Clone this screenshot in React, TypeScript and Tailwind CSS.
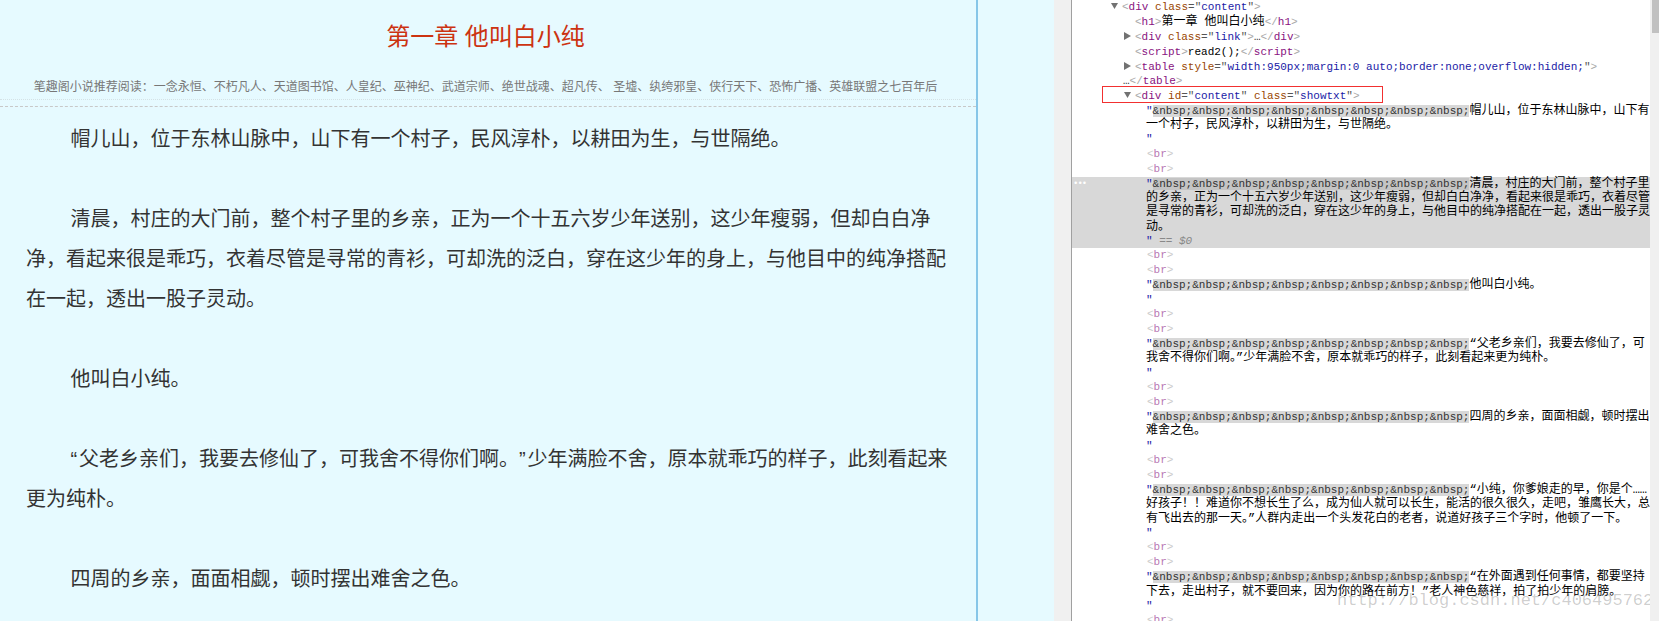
const mono = "font-['Liberation_Mono','Noto_Sans_CJK_SC',monospace]";

const paragraphs = [
  '帽儿山，位于东林山脉中，山下有一个村子，民风淳朴，以耕田为生，与世隔绝。',
  '清晨，村庄的大门前，整个村子里的乡亲，正为一个十五六岁少年送别，这少年瘦弱，但却白白净净，看起来很是乖巧，衣着尽管是寻常的青衫，可却洗的泛白，穿在这少年的身上，与他目中的纯净搭配在一起，透出一股子灵动。',
  '他叫白小纯。',
  '“父老乡亲们，我要去修仙了，可我舍不得你们啊。”少年满脸不舍，原本就乖巧的样子，此刻看起来更为纯朴。',
  '四周的乡亲，面面相觑，顿时摆出难舍之色。',
  '“小纯，你爹娘走的早，你是个……好孩子！！',
];

const nodes = [
  '帽儿山，位于东林山脉中，山下有一个村子，民风淳朴，以耕田为生，与世隔绝。',
  '清晨，村庄的大门前，整个村子里的乡亲，正为一个十五六岁少年送别，这少年瘦弱，但却白白净净，看起来很是乖巧，衣着尽管是寻常的青衫，可却洗的泛白，穿在这少年的身上，与他目中的纯净搭配在一起，透出一股子灵动。',
  '他叫白小纯。',
  '“父老乡亲们，我要去修仙了，可我舍不得你们啊。”少年满脸不舍，原本就乖巧的样子，此刻看起来更为纯朴。',
  '四周的乡亲，面面相觑，顿时摆出难舍之色。',
  '“小纯，你爹娘走的早，你是个……好孩子！！难道你不想长生了么，成为仙人就可以长生，能活的很久很久，走吧，雏鹰长大，总有飞出去的那一天。”人群内走出一个头发花白的老者，说道好孩子三个字时，他顿了一下。',
  '“在外面遇到任何事情，都要坚持下去，走出村子，就不要回来，因为你的路在前方！”老人神色慈祥，拍了拍少年的肩膀。',
];

function Arrow({ open }: { open?: boolean }) {
  if (open) {
    return (
      <svg width="7" height="6" viewBox="0 0 7 6" className="absolute top-[2px] -left-[11px] fill-[#727272]">
        <path d="M0 0h7L3.5 6z" />
      </svg>
    );
  }
  return (
    <svg width="7" height="8" viewBox="0 0 7 8" className="absolute top-[1px] -left-[11px] fill-[#727272]">
      <path d="M0 0l7 4-7 4z" />
    </svg>
  );
}

function P({ children }: { children: React.ReactNode }) {
  return <span className="text-[#a8a8a8]">{children}</span>;
}

function Tag({ name }: { name: string }) {
  return <span className="text-[#881280]">{name}</span>;
}

function Attr({ name, value }: { name: string; value: string }) {
  return (
    <>
      {' '}
      <span className="text-[#994500]">{name}</span>
      <span className="text-[#555]">="</span>
      <span className="text-[#1a1aa6]">{value}</span>
      <span className="text-[#555]">"</span>
    </>
  );
}

function Br() {
  return (
    <div className="h-[15px] pl-[75px] leading-[15px] opacity-60">
      <P>&lt;</P>
      <Tag name="br" />
      <P>&gt;</P>
    </div>
  );
}

function TextNode({ text, selected }: { text: string; selected?: boolean }) {
  return (
    <div className={`pl-[74px] leading-[14.33px] ${selected ? 'bg-[#d8d8d8]' : ''}`}>
      <span className="text-[#1a1aa6]">"</span>
      <span className={selected ? 'bg-[#c4c4c4] text-[#333]' : 'bg-[#d8d8d8] text-[#333]'}>
        {'&nbsp;'.repeat(8)}
      </span>
      <span className="text-[12px] leading-none text-black">{text}</span>
      <br />
      <span className="text-[#1a1aa6]">"</span>
      {selected && <span className="text-[#888] italic"> == $0</span>}
    </div>
  );
}

// curly quotes are a bit wider in the reference's body font
function BodyText({ text }: { text: string }) {
  const parts = text.split(/([“”])/);
  return (
    <>
      {parts.map((part, i) =>
        part === '“' || part === '”' ? (
          <span key={i} className="inline-block w-[8.5px]">
            {part}
          </span>
        ) : (
          part
        ),
      )}
    </>
  );
}

export default function App() {
  return (
    <div className="flex h-[621px] w-[1659px] overflow-hidden bg-white">
      {/* page side */}
      <div className="flex h-full w-[1054px] shrink-0 bg-[#e6faff]">
        <div className="h-full w-[978px] shrink-0 border-r-2 border-[#87c6e8] font-['Liberation_Sans','Noto_Sans_CJK_SC',sans-serif]">
          <h1 className="pr-[5px] pt-[20px] text-center text-[24px] leading-[34px] text-[#cc3311]">第一章 他叫白小纯</h1>
          <div className="mt-[23px] pr-[5px] text-center text-[12px] leading-[20px] text-[#777]">
            笔趣阁小说推荐阅读：一念永恒、不朽凡人、天道图书馆、人皇纪、巫神纪、武道宗师、绝世战魂、超凡传、 圣墟、纨绔邪皇、侠行天下、恐怖广播、英雄联盟之七百年后
          </div>
          <div className="mt-[2px] border-t border-dotted border-[#d4e2e6]" />
          <div className="mt-[6px] border-t border-dashed border-[#c8c8c8]" />
          <div className="w-[948px] pl-[26px] pt-[12px] text-[20px] leading-[40px] text-[#333]">
            {paragraphs.map((p, i) => (
              <p key={i} className="mb-[40px]">
                {'\u00a0'.repeat(8)}
                <BodyText text={p} />
              </p>
            ))}
          </div>
        </div>
      </div>

      {/* devtools gutter */}
      <div className="h-full w-[18px] shrink-0 border-r border-[#a0a0a0] bg-[#f0f0f0]" />

      {/* devtools tree */}
      <div className={`relative h-full min-w-0 flex-1 overflow-hidden text-[11px] ${mono}`}>
        <div className="h-[15px] pl-[50px] leading-[15px]">
          <span className="relative">
            <Arrow open />
            <P>&lt;</P>
            <Tag name="div" />
            <Attr name="class" value="content" />
            <P>&gt;</P>
          </span>
        </div>
        <div className="h-[15px] pl-[63px] leading-[15px]">
          <P>&lt;</P>
          <Tag name="h1" />
          <P>&gt;</P>
          <span className="text-[12px] leading-none text-black">第一章 他叫白小纯</span>
          <P>&lt;/</P>
          <Tag name="h1" />
          <P>&gt;</P>
        </div>
        <div className="h-[15px] pl-[63px] leading-[15px]">
          <span className="relative">
            <Arrow />
            <P>&lt;</P>
            <Tag name="div" />
            <Attr name="class" value="link" />
            <P>&gt;</P>
            <span className="text-[#333]">…</span>
            <P>&lt;/</P>
            <Tag name="div" />
            <P>&gt;</P>
          </span>
        </div>
        <div className="h-[15px] pl-[63px] leading-[15px]">
          <P>&lt;</P>
          <Tag name="script" />
          <P>&gt;</P>
          <span className="text-black">read2();</span>
          <P>&lt;/</P>
          <Tag name="script" />
          <P>&gt;</P>
        </div>
        <div className="pl-[63px] leading-[14.33px]">
          <span className="relative">
            <Arrow />
            <P>&lt;</P>
            <Tag name="table" />
            <Attr name="style" value="width:950px;margin:0 auto;border:none;overflow:hidden;" />
            <P>&gt;</P>
          </span>
        </div>
        <div className="pl-[51px] leading-[14.33px]">
          <span className="text-[#333]">…</span>
          <P>&lt;/</P>
          <Tag name="table" />
          <P>&gt;</P>
        </div>
        <div className="h-[15px] pl-[63px] leading-[15px]">
          <span className="relative">
            <Arrow open />
            <P>&lt;</P>
            <Tag name="div" />
            <Attr name="id" value="content" />
            <Attr name="class" value="showtxt" />
            <P>&gt;</P>
          </span>
        </div>

        {nodes.map((n, i) => (
          <div key={i}>
            <TextNode text={n} selected={i === 1} />
            <Br />
            <Br />
          </div>
        ))}

        {/* red annotation box */}
        <div className="absolute left-[30px] top-[86px] h-[17px] w-[281px] border border-[#f23030]" />

        {/* gutter dots on the selected row */}
        <div className="absolute left-[1px] top-[178px] text-[9px] leading-[12px] tracking-[-1px] text-white">•••</div>

        {/* blog watermark */}
        <div className="absolute left-[265px] top-[590px] text-[17px] leading-[22px] text-black/20">
          http://blog.csdn.net/c406495762
        </div>
      </div>

      {/* scrollbar */}
      <div className="h-full w-[9px] shrink-0 bg-[#f0f0f0] pl-[2px]">
        <div className="h-[33px] bg-[#c1c1c1]" />
      </div>
    </div>
  );
}
